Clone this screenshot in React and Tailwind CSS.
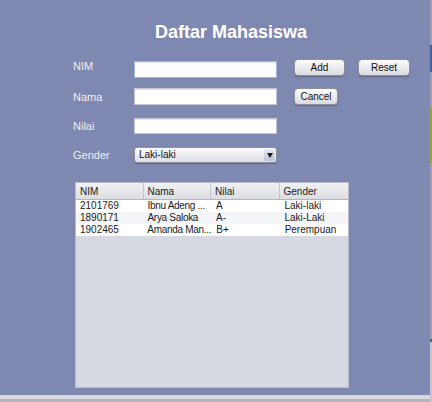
import React from "react";

const rows = [
  ["2101769", "Ibnu Adeng ...", "A", "Laki-laki", "bg-white"],
  ["1890171", "Arya Saloka", "A-", "Laki-Laki", "bg-[#f4f5f8]"],
  ["1902465", "Amanda Man...", "B+", "Perempuan", "bg-white"],
];

function Btn({ children, w }) {
  return (
    <div
      className={`${w} h-[17px] rounded-[4px] border border-[#8e91a0] bg-gradient-to-b from-[#fdfdfd] to-[#d9dbe1] shadow-[0_1px_1px_rgba(0,0,0,0.25)] flex items-center justify-center text-[10px] text-[#111] leading-none`}
    >
      {children}
    </div>
  );
}

function Field({ focus, h = "h-[17px]" }) {
  return (
    <div
      className={`w-[143px] ${h} bg-white border ${
        focus ? "border-[#9fb6dc]" : "border-[#c3c6d2]"
      } shadow-[inset_0_1px_1px_rgba(0,0,0,0.12)]`}
    />
  );
}

export default function App() {
  return (
    <div
      className="w-[432px] h-[402px] flex overflow-hidden"
      style={{ fontFamily: '"Liberation Sans", Arial, sans-serif' }}
    >
      <div className="w-[430px] flex flex-col">
        <div className="h-[395px] bg-[#7f88b0] flex flex-col">
          <div className="pt-[21px] pl-[155px] h-[43px] text-[18px] leading-[22px] font-bold text-white">
            Daftar Mahasiswa
          </div>
          <div className="pl-[73px] mt-[16px] flex flex-col">
            {/* Row 1 */}
            <div className="flex items-start h-[19px]">
              <div className="w-[61px] text-[11px] leading-[14px] text-[#eef0f6]">NIM</div>
              <div className="mt-[2px]">
                <Field focus />
              </div>
              <div className="ml-[17px] flex gap-[13px]">
                <Btn w="w-[51px]">Add</Btn>
                <Btn w="w-[52px]">Reset</Btn>
              </div>
            </div>
            {/* Row 2 */}
            <div className="flex items-start h-[17px] mt-[10px]">
              <div className="w-[61px] mt-[2px] text-[11px] leading-[14px] text-[#eef0f6]">Nama</div>
              <Field />
              <div className="ml-[17px]">
                <Btn w="w-[44px]">Cancel</Btn>
              </div>
            </div>
            {/* Row 3 */}
            <div className="flex items-start h-[16px] mt-[13px]">
              <div className="w-[61px] mt-[1px] text-[11px] leading-[14px] text-[#eef0f6]">Nilai</div>
              <Field h="h-[16px]" />
            </div>
            {/* Row 4 */}
            <div className="flex items-start h-[16px] mt-[13px]">
              <div className="w-[61px] mt-[1px] text-[11px] leading-[14px] text-[#eef0f6]">Gender</div>
              <div className="w-[143px] h-[16px] rounded-[3px] border border-[#8e91a0] bg-gradient-to-b from-[#fdfdfd] to-[#dcdee4] shadow-[0_1px_1px_rgba(0,0,0,0.25)] flex items-center">
                <div className="flex-1 pl-[4px] text-[10px] leading-none text-[#111]">Laki-laki</div>
                <div className="w-[11px] h-[12px] mr-[1px] rounded-[2px] bg-gradient-to-b from-[#e8ecf4] to-[#b9c3d6] flex items-center justify-center">
                  <svg width="6" height="5" viewBox="0 0 6 5">
                    <path d="M0 0 L6 0 L3 5 Z" fill="#1a1a1a" />
                  </svg>
                </div>
              </div>
            </div>
          </div>
          {/* Table */}
          <div className="ml-[75px] mt-[19px] w-[274px] h-[206px] bg-[#d6d9e2] border border-[#b9bcc8] flex flex-col text-[10px] text-[#1a1a1a] whitespace-nowrap">
            <div className="h-[17px] flex bg-gradient-to-b from-[#f0f1f4] to-[#dcdee3] border-b border-[#b3b6c0] shrink-0">
              {["NIM", "Nama", "Nilai", "Gender"].map((h, i) => (
                <div
                  key={h}
                  className={`${i === 0 || i === 1 ? "w-[68px]" : "w-[69px]"} ${
                    i < 3 ? "border-r border-[#c2c4cc]" : ""
                  } pl-[4px] flex items-center`}
                >
                  {h}
                </div>
              ))}
            </div>
            {rows.map((r) => (
              <div key={r[0]} className={`h-[12px] flex shrink-0 ${r[4]}`}>
                <div className="w-[68px] pl-[4px] leading-[12px]">{r[0]}</div>
                <div className="w-[68px] pl-[4px] leading-[12px] tracking-[-0.3px]">{r[1]}</div>
                <div className="w-[69px] pl-[5px] leading-[12px]">{r[2]}</div>
                <div className="w-[69px] pl-[5px] leading-[12px]">{r[3]}</div>
              </div>
            ))}
          </div>
        </div>
        <div className="h-[4px] bg-[#d9dadf]" />
        <div className="h-[3px] bg-[#b3b5bd]" />
      </div>
      <div className="w-[2px] flex flex-col bg-[#9a9fb8]">
        <div className="h-[45px]" />
        <div className="h-[27px] bg-[#3d62a0]" />
        <div className="h-[36px]" />
        <div className="h-[55px] bg-[#8ca43e]" />
        <div className="h-[176px]" />
        <div className="h-[3px] bg-[#3d62a0]" />
        <div className="flex-1 bg-[#c4c6cd]" />
      </div>
    </div>
  );
}
